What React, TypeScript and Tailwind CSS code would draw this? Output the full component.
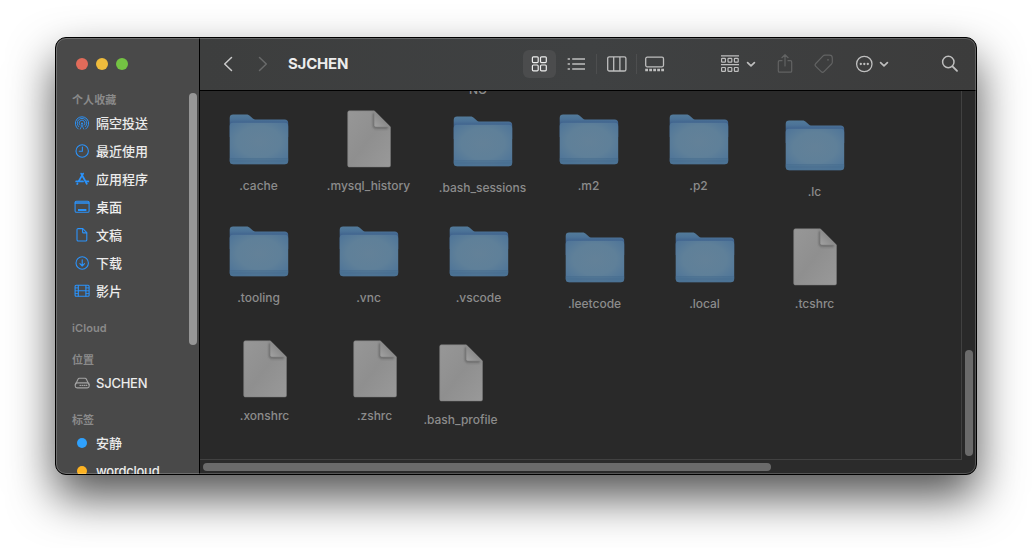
import type { ReactNode } from 'react';

type Entry = { name: string; kind: 'folder' | 'file'; x: number; y: number };

// Free icon canvas: x is the icon centre, y the label centre, relative to the canvas.
const entries: Entry[] = [
  { name: '.cache', kind: 'folder', x: 59, y: 95 },
  { name: '.mysql_history', kind: 'file', x: 169, y: 95 },
  { name: '.bash_sessions', kind: 'folder', x: 283, y: 97 },
  { name: '.m2', kind: 'folder', x: 389, y: 95 },
  { name: '.p2', kind: 'folder', x: 499, y: 95 },
  { name: '.lc', kind: 'folder', x: 615, y: 101 },
  { name: '.tooling', kind: 'folder', x: 59, y: 207 },
  { name: '.vnc', kind: 'folder', x: 169, y: 207 },
  { name: '.vscode', kind: 'folder', x: 279, y: 207 },
  { name: '.leetcode', kind: 'folder', x: 395, y: 213 },
  { name: '.local', kind: 'folder', x: 505, y: 213 },
  { name: '.tcshrc', kind: 'file', x: 615, y: 213 },
  { name: '.xonshrc', kind: 'file', x: 65, y: 325 },
  { name: '.zshrc', kind: 'file', x: 175, y: 325 },
  { name: '.bash_profile', kind: 'file', x: 261, y: 329 },
];

function Defs() {
  return (
    <svg width="0" height="0" className="absolute">
      <defs>
        <linearGradient id="back" x1="0" y1="0" x2="0" y2="1">
          <stop offset="0" stopColor="#527a9a" />
          <stop offset="0.2" stopColor="#4c7397" />
          <stop offset="0.38" stopColor="#3f628d" />
          <stop offset="1" stopColor="#3f628d" />
        </linearGradient>
        <radialGradient id="front" cx="0.5" cy="0.45" r="0.62">
          <stop offset="0" stopColor="#638198" />
          <stop offset="0.6" stopColor="#5f8099" />
          <stop offset="1" stopColor="#507699" />
        </radialGradient>
        <linearGradient id="paper" x1="0" y1="0" x2="1" y2="1">
          <stop offset="0" stopColor="#979797" />
          <stop offset="0.5" stopColor="#8f8f8f" />
          <stop offset="1" stopColor="#999999" />
        </linearGradient>
        <linearGradient id="fold" x1="0" y1="1" x2="1" y2="0">
          <stop offset="0" stopColor="#a2a2a2" />
          <stop offset="0.5" stopColor="#8a8a8a" />
          <stop offset="1" stopColor="#8a8a8a" />
        </linearGradient>
        <filter id="soft" x="-40%" y="-40%" width="180%" height="180%">
          <feGaussianBlur stdDeviation="1" />
        </filter>
      </defs>
    </svg>
  );
}

function FolderIcon() {
  return (
    <svg width="64" height="64" viewBox="0 0 64 64">
      <path d="M2.700 11a3.400 3.400 0 0 1 3.400-3.400h13.200c1.800 0 2.800.5 4 1.600l2 1.800c1.100 1 2 1.500 3.800 1.500h28.500a3.600 3.600 0 0 1 3.600 3.600V30H2.700z" fill="url(#back)" />
      <path d="M2.700 19.200a3.400 3.400 0 0 1 3.400-3.400h51.700a3.400 3.400 0 0 1 3.400 3.400v34.500a3.600 3.600 0 0 1-3.600 3.600H6.300a3.600 3.600 0 0 1-3.600-3.600z" fill="url(#front)" />
      <path d="M2.700 51.500h58.500v2.200a3.600 3.600 0 0 1-3.600 3.600H6.300a3.600 3.600 0 0 1-3.600-3.600z" fill="#466d90" fillOpacity=".5" />
      <path d="M2.700 51.500h58.500M2.700 54h58.500" stroke="#42678b" strokeOpacity=".6" strokeWidth=".5" />
    </svg>
  );
}

function FileIcon() {
  return (
    <svg width="64" height="64" viewBox="0 0 64 64">
      <path d="M12.300 3.800h25L53.500 20v38.400a1.600 1.600 0 0 1-1.600 1.600H12.300a1.600 1.600 0 0 1-1.600-1.600v-53a1.600 1.600 0 0 1 1.600-1.600z" fill="url(#paper)" stroke="#7c7c7c" strokeWidth=".5" />
      <path d="M36.800 6v12.600a2 2 0 0 0 2 2H51" fill="none" stroke="#4a4a4a" strokeOpacity=".75" strokeWidth="1.600" filter="url(#soft)" />
      <path d="M37.400 4v14.200a1.600 1.600 0 0 0 1.600 1.600h14.200z" fill="url(#fold)" />
    </svg>
  );
}

function Icon({ children, className = '' }: { children: ReactNode; className?: string }) {
  return (
    <svg width="16" height="16" viewBox="0 0 16 16" fill="none" stroke="currentColor" strokeWidth="1.100" strokeLinecap="round" strokeLinejoin="round" className={className}>
      {children}
    </svg>
  );
}

const airdrop = (
  <>
    <path d="M4.200 14A6.700 6.700 0 1 1 11.800 14" strokeWidth=".95" />
    <path d="M4.700 11.700A4.800 4.800 0 1 1 11.300 11.700" strokeWidth=".9" />
    <path d="M5.900 10.100A2.900 2.900 0 1 1 10.100 10.100" strokeWidth=".9" />
    <circle cx="8" cy="8.400" r="1" fill="currentColor" stroke="none" />
    <path d="M8 10 6.300 14M8 10l1.700 4" strokeWidth=".8" />
  </>
);
const clock = (
  <>
    <circle cx="8.200" cy="8" r="6.200" />
    <path d="M8.400 4.100v4.200H5.300" />
  </>
);
const apps = (
  <>
    <path d="M9.100 2.600 4.900 9.900M7.200 2.600l5.600 10.200" strokeWidth="1.800" />
    <path d="M2.200 10.400h6.800M12.200 10.400h2.100M3.500 12.500l-.3.500" strokeWidth="1.800" />
  </>
);
const desktop = (
  <>
    <rect x="1.100" y="2.300" width="14" height="11" rx="1.400" />
    <path d="M1.300 4h13.600" strokeWidth="1.400" />
    <path d="M4 11h8.400" strokeWidth="1.800" strokeLinecap="butt" />
  </>
);
const doc = (
  <>
    <path d="M4.200 1.600h4.600l4 4v7.200a1.200 1.200 0 0 1-1.200 1.200H4.200a1.200 1.200 0 0 1-1.200-1.200v-10a1.200 1.200 0 0 1 1.200-1.200z" />
    <path d="M8.600 1.900v3a1 1 0 0 0 1 1h3" />
  </>
);
const download = (
  <>
    <circle cx="8.200" cy="8" r="6.200" />
    <path d="M8.200 4.800v6M5.900 8.700l2.300 2.300 2.300-2.300" />
  </>
);
const film = (
  <>
    <rect x="1.100" y="2.300" width="14" height="11" rx="1" />
    <path d="M4.300 2.600v10.400M11.900 2.600v10.400M4.300 7.800h7.600" />
    <path d="M1.300 4.900H4M1.300 7.800H4M1.300 10.600H4M12.100 4.900h2.700M12.100 7.800h2.700M12.100 10.600h2.700" strokeWidth=".9" />
  </>
);
const disk = (
  <>
    <path d="M1.400 9.700 4 4.200a1.600 1.600 0 0 1 1.400-.9H11a1.600 1.600 0 0 1 1.400.9L15 9.700" />
    <rect x="1.200" y="7.900" width="14" height="5" rx="1.900" />
    <path d="M6 10.400h5" strokeDasharray=".5 1.500" />
    <path d="M12 10.400h.8" />
  </>
);

const favourites = [
  { label: '隔空投送', icon: airdrop },
  { label: '最近使用', icon: clock },
  { label: '应用程序', icon: apps },
  { label: '桌面', icon: desktop },
  { label: '文稿', icon: doc },
  { label: '下载', icon: download },
  { label: '影片', icon: film },
];

function Heading({ children }: { children: ReactNode }) {
  return <h2 className="flex h-[18px] items-center pl-4 text-[11px] font-semibold tracking-[0.1px] text-[#8a8a8a]">{children}</h2>;
}

function Row({ icon, children }: { icon: ReactNode; children: ReactNode }) {
  return (
    <li className="flex h-7 items-center pl-[18px] text-[13px] font-medium text-[#ececec]">
      <span className="mr-[6px] flex w-4 justify-center">{icon}</span>
      <span className="pt-[2px]">{children}</span>
    </li>
  );
}

function Sidebar() {
  return (
    <aside className="relative flex w-[144px] shrink-0 flex-col overflow-hidden border-r border-black bg-[#494949]">
      <div className="flex h-[53px] shrink-0 items-center gap-2 pb-px pl-5">
        <span className="size-3 rounded-full bg-[#e16b5a]" />
        <span className="size-3 rounded-full bg-[#efbc3c]" />
        <span className="size-3 rounded-full bg-[#74c343]" />
      </div>
      <nav className="flex flex-col gap-[14px]">
        <section>
          <Heading>个人收藏</Heading>
          <ul>
            {favourites.map((f) => (
              <Row key={f.label} icon={<Icon className="text-[#2b93fb]">{f.icon}</Icon>}>
                {f.label}
              </Row>
            ))}
          </ul>
        </section>
        <section>
          <Heading>iCloud</Heading>
        </section>
        <section>
          <Heading>位置</Heading>
          <ul>
            <Row icon={<Icon className="text-[#a3a3a3]">{disk}</Icon>}>
              <span className="tracking-[-0.25px]">SJCHEN</span>
            </Row>
          </ul>
        </section>
        <section>
          <Heading>标签</Heading>
          <ul>
            <Row icon={<span className="size-[10px] rounded-full bg-[#2fa1fd]" />}>安静</Row>
            <Row icon={<span className="size-[10px] rounded-full bg-[#fdb323]" />}>
              <span className="tracking-[-0.25px]">wordcloud</span>
            </Row>
          </ul>
        </section>
      </nav>
      <div className="absolute top-[55px] right-[2px] h-[252px] w-2 rounded-full bg-[#969696]" />
    </aside>
  );
}

function Caret() {
  return (
    <svg width="10" height="10" viewBox="0 0 10 10" fill="none" stroke="#bebebe" strokeWidth="1.700" strokeLinecap="round" strokeLinejoin="round">
      <path d="M1.600 3.600 5 6.800l3.400-3.200" />
    </svg>
  );
}

function Toolbar() {
  return (
    <header className="flex h-[53px] shrink-0 items-center border-b border-black bg-linear-to-r from-[#3d3e3e] via-[#3f4142] to-[#3c3c3c] pb-px text-[#bebebe]">
      <svg width="10" height="16" viewBox="0 0 10 16" fill="none" stroke="#cacaca" strokeWidth="1.500" strokeLinecap="round" strokeLinejoin="round" className="ml-[23px]">
        <path d="M8.500 1.500 1.700 8l6.800 6.500" />
      </svg>
      <svg width="10" height="16" viewBox="0 0 10 16" fill="none" stroke="#696a6a" strokeWidth="1.500" strokeLinecap="round" strokeLinejoin="round" className="ml-[25px]">
        <path d="M1.500 1.500 8.300 8l-6.800 6.500" />
      </svg>
      <h1 className="ml-5 w-[235px] pt-[2px] text-[15px] font-bold tracking-[-0.2px] text-[#ececec]">SJCHEN</h1>

      <div className="flex items-center">
        <span className="flex h-7 w-[33px] items-center rounded-md bg-[#4b4c4d] pl-2">
          <svg width="17" height="16" viewBox="0 0 17 16" fill="none" stroke="#ededed" strokeWidth="1.200">
            <rect x="1.400" y=".8" width="5.800" height="5.800" rx="1" />
            <rect x="9.500" y=".8" width="5.800" height="5.800" rx="1" />
            <rect x="1.400" y="9" width="5.800" height="5.800" rx="1" />
            <rect x="9.500" y="9" width="5.800" height="5.800" rx="1" />
          </svg>
        </span>
        <svg width="18" height="14" viewBox="0 0 18 14" fill="none" stroke="currentColor" strokeWidth="1.400" className="ml-[11px]">
          <path d="M5.200 2H18M5.200 7H18M5.200 12H18" />
          <path d="M1.500 2h.6M1.500 7h.6M1.500 12h.6" strokeWidth="1.700" strokeLinecap="square" />
        </svg>
        <span className="ml-[11px] h-5 w-px bg-[#4d4e4f]" />
        <svg width="20" height="16" viewBox="0 0 20 16" fill="none" stroke="currentColor" strokeWidth="1.300" className="ml-[10px]">
          <rect x=".7" y=".8" width="18.200" height="14.200" rx="1.600" />
          <path d="M6.700 1v14M12.900 1v14" />
        </svg>
        <span className="ml-[9px] h-5 w-px bg-[#4d4e4f]" />
        <svg width="20" height="16" viewBox="0 0 20 16" fill="none" stroke="currentColor" strokeWidth="1.300" className="ml-2">
          <rect x=".7" y="1.200" width="17.800" height="9.600" rx="1.500" />
          <path d="M.2 14h18.800" strokeWidth="2.600" strokeDasharray="2.800 1.200" />
        </svg>
      </div>

      <div className="ml-[55px] flex items-center gap-[6px]">
        <svg width="20" height="18" viewBox="0 0 20 18" fill="none" stroke="currentColor" strokeWidth="1.200">
          <path d="M1 .8h18M1 9.700h18" />
          <rect x="1.600" y="3.300" width="3.800" height="3.800" rx=".6" />
          <rect x="8" y="3.300" width="3.800" height="3.800" rx=".6" />
          <rect x="14.400" y="3.300" width="3.800" height="3.800" rx=".6" />
          <rect x="1.600" y="12.500" width="3.800" height="3.800" rx=".6" />
          <rect x="8" y="12.500" width="3.800" height="3.800" rx=".6" />
          <rect x="14.400" y="12.500" width="3.800" height="3.800" rx=".6" />
        </svg>
        <Caret />
      </div>
      <svg width="16" height="20" viewBox="0 0 16 20" fill="none" stroke="#626363" strokeWidth="1.200" strokeLinecap="round" strokeLinejoin="round" className="ml-[21px]">
        <path d="M5 6.700H2.600A1.300 1.300 0 0 0 1.300 8v8.900a1.300 1.300 0 0 0 1.300 1.300h10.800a1.300 1.300 0 0 0 1.300-1.300V8a1.300 1.300 0 0 0-1.300-1.300H11" />
        <path d="M8 11.900V.9M4.900 3.700 8 .7l3.100 3" />
      </svg>
      <svg width="20" height="20" viewBox="0 0 20 20" fill="none" stroke="#626363" strokeWidth="1.200" strokeLinecap="round" strokeLinejoin="round" className="ml-[21px]">
        <path d="M10.800 1.100h4.700a2.800 2.800 0 0 1 2.800 2.800v4.400c0 .7-.3 1.200-.8 1.700l-7.500 7.700c-.9.9-1.900.9-2.800 0l-5.400-5.400c-.9-.9-.9-1.900 0-2.800l7.300-7.600c.5-.5 1-.8 1.700-.8z" />
        <circle cx="14" cy="5.800" r=".9" fill="#626363" stroke="none" />
      </svg>
      <div className="ml-[21px] flex items-center gap-[5px]">
        <svg width="19" height="18" viewBox="0 0 19 18" fill="none" stroke="currentColor" strokeWidth="1.300">
          <circle cx="9.300" cy="9" r="7.700" />
          <g fill="currentColor" stroke="none">
            <circle cx="5.800" cy="9" r="1.150" />
            <circle cx="9.300" cy="9" r="1.150" />
            <circle cx="12.800" cy="9" r="1.150" />
          </g>
        </svg>
        <Caret />
      </div>
      <svg width="18" height="18" viewBox="0 0 18 18" fill="none" stroke="currentColor" strokeWidth="1.500" strokeLinecap="round" className="ml-[52px]">
        <circle cx="7.300" cy="7" r="5.700" />
        <path d="m11.500 11.300 4.500 4.500" strokeWidth="1.900" />
      </svg>
    </header>
  );
}

function Canvas() {
  return (
    <div className="relative h-[369px] w-[762px] overflow-hidden border-r border-b border-[#414141] text-xs font-medium text-[#8c8c8c]">
      <span className="absolute top-[-9px] left-[269px] leading-4">NG</span>
      {entries.map((e) => (
        <figure
          key={e.name}
          className="absolute flex w-28 -translate-x-1/2 flex-col items-center"
          style={{ left: e.x, top: e.y - 79 }}
        >
          {e.kind === 'folder' ? <FolderIcon /> : <FileIcon />}
          <figcaption className="mt-[7px] pr-px leading-4 tracking-[-0.02px] whitespace-nowrap">{e.name}</figcaption>
        </figure>
      ))}
    </div>
  );
}

export default function App() {
  return (
    <div
      className="h-[548px] w-[1032px] overflow-hidden bg-white pt-[37px] pl-[55px]"
      style={{ fontFamily: 'Inter, "Noto Sans CJK SC", sans-serif' }}
    >
      <Defs />
      <div className="relative flex h-[438px] w-[922px] overflow-hidden rounded-[11px] border border-black bg-[#292929] shadow-[0_22px_46px_rgba(0,0,0,0.68)]">
        <Sidebar />
        <main className="flex min-w-0 flex-1 flex-col">
          <Toolbar />
          <div className="flex">
            <Canvas />
            <div className="flex flex-1 items-end pb-1 pl-[3px]">
              <span className="h-[106px] w-2 rounded-full bg-[#6b6b6b]" />
            </div>
          </div>
          <div className="flex flex-1 items-start bg-[#2b2b2b] pt-[3px] pl-[3px]">
            <span className="h-2 w-[568px] rounded-full bg-[#6b6b6b]" />
          </div>
        </main>
        <div className="pointer-events-none absolute inset-0 rounded-[10px] border border-white/20" />
      </div>
    </div>
  );
}
